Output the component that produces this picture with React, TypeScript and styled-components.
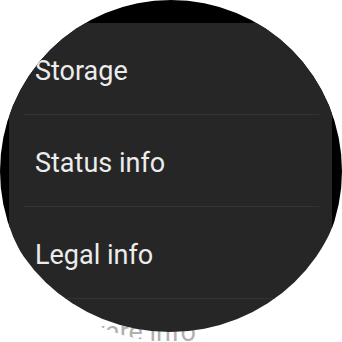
import React from "react";
import styled, { createGlobalStyle } from "styled-components";

const Global = createGlobalStyle`
  html, body { margin: 0; padding: 0; background: #ffffff; }
  #root { width: 342px; height: 342px; }
`;

const Frame = styled.div`
  width: 342px;
  height: 342px;
  border-radius: 50%;
  overflow: hidden;
  background: linear-gradient(to bottom, #000000 0, #000000 228px, #ffffff 228px);
  display: grid;
  grid-template-columns: 342px;
  grid-template-rows: 342px;
  font-family: Roboto, "Noto Sans", "Liberation Sans", sans-serif;
`;

const Under = styled.div`
  grid-area: 1 / 1;
  padding: 316px 0 0 35px;
`;

const Panel = styled.div`
  grid-area: 1 / 1;
  margin: 23px 10px 0 9px;
  background: #262626;
  clip-path: ellipse(176px 170px at 161px 139px);
  display: flex;
  flex-direction: column;
`;

const Row = styled.div`
  box-sizing: border-box;
  height: 92px;
  margin: 0 13px 0 15px;
  padding: 32px 0 0 11px;
  border-bottom: 1px solid #333333;
`;

const Label = styled.div<{ $dim?: boolean }>`
  font-size: 27px;
  line-height: 32px;
  color: ${(p) => (p.$dim ? "#b0b0b0" : "#ececec")};
  white-space: nowrap;
`;

const items = ["Storage", "Status info", "Legal info"];

export default function App() {
  return (
    <>
      <Global />
      <Frame>
        <Under>
          <Label $dim>Software info</Label>
        </Under>
        <Panel>
          {items.map((t) => (
            <Row key={t}>
              <Label>{t}</Label>
            </Row>
          ))}
        </Panel>
      </Frame>
    </>
  );
}
